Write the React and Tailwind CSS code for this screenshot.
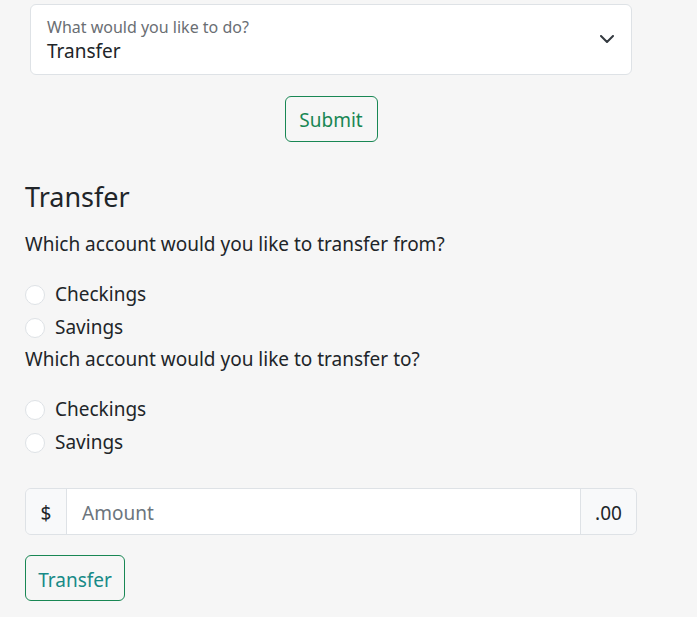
export default function App() {
  return (
    <div className="min-h-screen bg-[#f6f6f6] font-['Noto_Sans',sans-serif] text-[#212529]">
      <div className="pt-[4px] pl-[30px] w-[632px]">
        <div className="h-[71px] bg-white border border-[#dee2e6] rounded-[6px] flex flex-row items-center pl-[16px] pr-[17px]">
          <div className="flex-1 flex flex-col self-start pt-[12px]">
            <span className="text-[16px] leading-[20px] text-[#6a6e73]">What would you like to do?</span>
            <span className="mt-[2px] text-[19px] leading-[24px] text-[#212529]">Transfer</span>
          </div>
          <svg width="14" height="8" viewBox="0 0 14 8" className="mb-[1px]">
            <polyline points="1,1 7,7 13,1" fill="none" stroke="#343a40" strokeWidth="2" strokeLinecap="round" strokeLinejoin="round" />
          </svg>
        </div>
        <div className="flex justify-center mt-[21px]">
          <button className="h-[46px] w-[93px] pt-[2px] border border-[#198754] rounded-[6px] text-[#198754] text-[19px] leading-[24px] bg-transparent">
            Submit
          </button>
        </div>
      </div>

      <div className="pl-[25px] flex flex-col">
        <h4 className="mt-[37px] text-[27px] leading-[35px] font-normal">Transfer</h4>
        <p className="mt-[16px] text-[19px] leading-[29px]">Which account would you like to transfer from?</p>
        <div className="mt-[19px] flex flex-col">
          <label className="h-[33px] flex items-center">
            <span className="w-[20px] h-[20px] rounded-full border border-[#dee2e6] bg-white" />
            <span className="ml-[10px] text-[19px] leading-[29px]">Checkings</span>
          </label>
          <label className="h-[33px] flex items-center">
            <span className="w-[20px] h-[20px] rounded-full border border-[#dee2e6] bg-white" />
            <span className="ml-[10px] text-[19px] leading-[29px]">Savings</span>
          </label>
        </div>
        <p className="mt-[1px] text-[19px] leading-[29px]">Which account would you like to transfer to?</p>
        <div className="mt-[19px] flex flex-col">
          <label className="h-[33px] flex items-center">
            <span className="w-[20px] h-[20px] rounded-full border border-[#dee2e6] bg-white" />
            <span className="ml-[10px] text-[19px] leading-[29px]">Checkings</span>
          </label>
          <label className="h-[33px] flex items-center">
            <span className="w-[20px] h-[20px] rounded-full border border-[#dee2e6] bg-white" />
            <span className="ml-[10px] text-[19px] leading-[29px]">Savings</span>
          </label>
        </div>

        <div className="mt-[29px] w-[612px] h-[47px] flex border border-[#dee2e6] rounded-[6px] overflow-hidden">
          <div className="w-[41px] pt-[3px] bg-[#f8f9fa] border-r border-[#dee2e6] flex items-center justify-center text-[19px]">$</div>
          <div className="flex-1 pt-[3px] bg-white flex items-center pl-[15px] text-[19px] text-[#6c757d]">Amount</div>
          <div className="w-[56px] pt-[3px] bg-[#f8f9fa] border-l border-[#dee2e6] flex items-center justify-center text-[19px]">.00</div>
        </div>

        <div className="mt-[20px]">
          <button className="h-[46px] w-[100px] pt-[3px] border border-[#198754] rounded-[6px] text-[#178a87] text-[19px] leading-[24px] bg-transparent">
            Transfer
          </button>
        </div>
      </div>
    </div>
  );
}
